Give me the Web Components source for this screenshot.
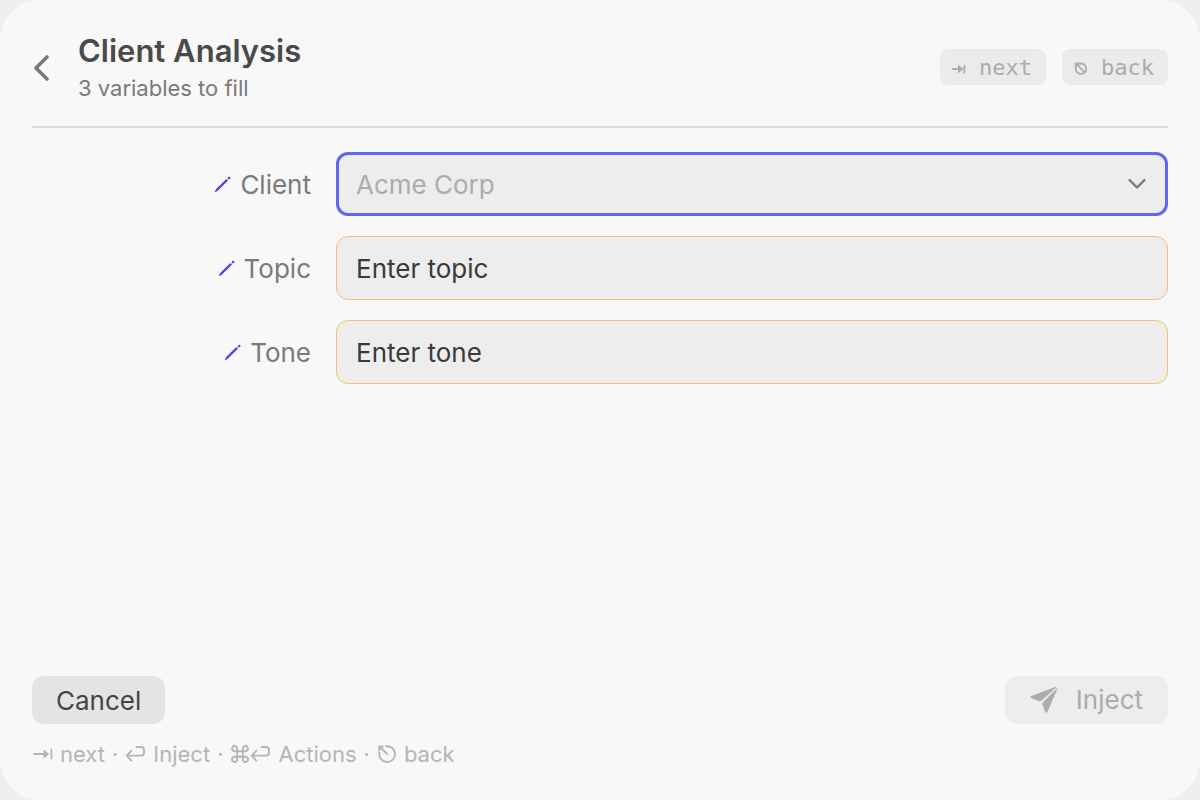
<!DOCTYPE html>
<html lang="en">
<head>
<meta charset="utf-8">
<meta name="viewport" content="width=device-width, initial-scale=1">
<title>Client Analysis</title>
<style>
  :root {
    --surface: #f8f8f8;
    --field: #ededed;
    --line: #dddddd;
    --accent: #6366f1;
    --accent-deep: #4f46e5;
    --warning: #f2c078;
    --text: #3a3a3a;
    --muted: #7a7a7a;
    --faint: #acacac;
    --hint: #b5b5b5;
    --mono: "DejaVu Sans Mono", "Liberation Mono", monospace;
  }
  body {
    margin: 0;
    background: #efefef;
    color: var(--text);
    font-family: Inter, "Liberation Sans", sans-serif;
  }
</style>
</head>
<body>
<prompt-panel heading="Client Analysis" subtitle="3 variables to fill">
  <key-badge slot="keys" icon="tab-small">next</key-badge>
  <key-badge slot="keys" icon="esc-small">back</key-badge>

  <variable-field label="Client" type="select" value="Acme Corp" active></variable-field>
  <variable-field label="Topic" value="Enter topic"></variable-field>
  <variable-field label="Tone" value="Enter tone"></variable-field>

  <panel-button slot="actions">Cancel</panel-button>
  <panel-button slot="actions" icon="send" disabled>Inject</panel-button>

  <key-hint slot="hints" icons="tab">next</key-hint>
  <key-hint slot="hints" icons="return">Inject</key-hint>
  <key-hint slot="hints" icons="command return">Actions</key-hint>
  <key-hint slot="hints" icons="esc">back</key-hint>
</prompt-panel>

<script>
const ICONS = {
  back: [18, 28, '<path d="M15 4 4 15 15 26" stroke-width="3.6"/>'],
  chevron: [20, 14, '<path d="M2.5 3 10 10.5 17.5 3" stroke-width="2.4"/>'],
  pencil: [16, 16, '<path d="M2.2 13.6 11.6 4.4" stroke-width="2.3"/><path d="M.8 15.1 2 14" stroke-width="1.6"/><path d="m14 2.2.2-.2" stroke-width="2.5"/>'],
  'tab-small': [14, 14, '<path d="M.8 8H9" stroke-width="1.8"/><path d="M6 3.8v8.4L11.8 8z" fill="currentColor" stroke="none"/><path d="M12.4 4.4v7.2" stroke-width="1.8"/>'],
  'esc-small': [14, 14, '<path d="M4.8 3A5.2 5.2 0 1 1 2.2 5.7" stroke-width="1.8"/><path d="M2.5 3 10.6 11.3" stroke-width="1.7"/><path d="M.8 1.6h5.2L.8 6.8z" fill="currentColor" stroke="none"/>'],
  tab: [21, 20, '<path d="M2 10h12" stroke-width="1.9"/><path d="M11.5 5.4v9.2L17.2 10z" fill="currentColor" stroke="none"/><path d="M19.4 5.5v9" stroke-width="1.8"/>'],
  return: [21, 20, '<path d="M11.5 3H16a3 3 0 0 1 3 3v2.6a3 3 0 0 1-3 3H2.2" stroke-width="1.9"/><path d="M6.2 6.8 1.8 11.6 6.2 16.6" stroke-width="1.9"/>'],
  command: [20, 20, '<path d="M7.2 7.2H12.8V12.8H7.2zM7.2 7.2H4.7A2.6 2.6 0 1 1 7.2 4.6zM12.8 7.2V4.6A2.6 2.6 0 1 1 15.3 7.2zM12.8 12.8h2.5a2.6 2.6 0 1 1-2.5 2.6zM7.2 12.8v2.6a2.6 2.6 0 1 1-2.5-2.6z" stroke-width="1.9"/>'],
  esc: [20, 20, '<path d="M9 2.3A7.9 7.9 0 1 1 2.4 8.6" stroke-width="1.9"/><path d="M3.5 3.5 10 9.8" stroke-width="1.9"/><path d="M1.3 1.7h6.2L1.3 7.9z" fill="currentColor" stroke="none"/>'],
  send: [28, 28, '<path d="M26 .8 1.3 10Q-.5 10.9 1.2 11.9L8.8 15Q10.6 15.6 12 14.2L26.2 1.4Q26.6.6 26 .8z" fill="currentColor" stroke="none"/><path d="M27 2.2 13.2 15.9Q12 17.1 12.5 18.8L15.2 26Q16.2 27.6 17.3 26L27.5 2.8Q27.6 1.8 27 2.2z" fill="currentColor" stroke="none"/>']
};

function icon(name) {
  const [width, height, body] = ICONS[name];
  return `<svg class="icon" width="${width}" height="${height}" viewBox="0 0 ${width} ${height}"
    fill="none" stroke="currentColor" stroke-linecap="round" stroke-linejoin="round" aria-hidden="true">${body}</svg>`;
}

/**
 * Window frame: header, variable list, action bar and key hints.
 */
class PromptPanel extends HTMLElement {
  constructor() {
    super();
    this.attachShadow({ mode: 'open' });
  }

  connectedCallback() {
    this.shadowRoot.innerHTML = `
      <style>
        :host {
          display: flex;
          flex-direction: column;
          box-sizing: border-box;
          min-height: 100vh;
          padding: 32px;
          border-radius: 40px;
          background: var(--surface);
        }
        header {
          display: flex;
          align-items: center;
          gap: 28px;
          padding-bottom: 24px;
          border-bottom: 2px solid var(--line);
        }
        .back {
          display: flex;
          padding: 0;
          border: 0;
          background: none;
          color: var(--muted);
        }
        .titles { flex: 1; }
        h1 {
          margin: 0 0 4px;
          color: #4a4a4a;
          font-size: 31px;
          font-weight: 600;
          line-height: 38px;
        }
        p {
          margin: 0;
          color: var(--muted);
          font-size: 22px;
          line-height: 28px;
        }
        .keys { display: flex; gap: 16px; }
        main {
          flex: 1;
          display: flex;
          flex-direction: column;
          gap: 20px;
          padding: 24px 0;
        }
        .actions {
          display: flex;
          justify-content: space-between;
        }
        footer {
          display: flex;
          margin-top: 16px;
          color: var(--hint);
          font-size: 22px;
          line-height: 28px;
        }
      </style>
      <header>
        <button class="back" aria-label="Back">${icon('back')}</button>
        <div class="titles">
          <h1>${this.getAttribute('heading')}</h1>
          <p>${this.getAttribute('subtitle')}</p>
        </div>
        <div class="keys"><slot name="keys"></slot></div>
      </header>
      <main><slot></slot></main>
      <div class="actions"><slot name="actions"></slot></div>
      <footer><slot name="hints"></slot></footer>
    `;
  }
}

/**
 * Shortcut badge in the header.
 */
class KeyBadge extends HTMLElement {
  constructor() {
    super();
    this.attachShadow({ mode: 'open' });
  }

  connectedCallback() {
    this.shadowRoot.innerHTML = `
      <style>
        :host { display: block; }
        button {
          display: flex;
          align-items: center;
          gap: 13px;
          height: 36px;
          padding: 2px 14px 0 12px;
          border: 0;
          border-radius: 8px;
          background: #ebebeb;
          color: var(--faint);
          font: 22px/28px var(--mono);
        }
      </style>
      <button>${icon(this.getAttribute('icon'))}<span><slot></slot></span></button>
    `;
  }
}

/**
 * One labelled variable, either free text or a list of choices.
 */
class VariableField extends HTMLElement {
  constructor() {
    super();
    this.attachShadow({ mode: 'open' });
  }

  connectedCallback() {
    const value = this.getAttribute('value') || '';
    const isSelect = this.getAttribute('type') === 'select';
    const control = isSelect
      ? `<select id="control"><option>${value}</option></select>${icon('chevron')}`
      : `<input id="control" type="text" value="${value}">`;

    this.shadowRoot.innerHTML = `
      <style>
        :host {
          display: grid;
          grid-template-columns: 280px 1fr;
          align-items: center;
          gap: 24px;
          font-size: 26px;
          line-height: 32px;
        }
        label {
          display: flex;
          align-items: center;
          justify-content: flex-end;
          gap: 9px;
          padding-right: 1px;
          color: var(--muted);
        }
        label .icon { color: var(--accent-deep); }
        label span, input, select { padding: 2px 0 0; }
        .control {
          display: grid;
          align-items: center;
          box-sizing: border-box;
          height: 64px;
          padding: 0 19px;
          border: 1px solid var(--warning);
          border-radius: 12px;
          background: var(--field);
        }
        :host([active]) .control {
          padding: 0 18px 0 17px;
          border: 3px solid var(--accent);
        }
        input, select {
          grid-area: 1 / 1;
          width: 100%;
          margin: 0;
          border: 0;
          outline: 0;
          appearance: none;
          background: none;
          color: var(--text);
          font: inherit;
        }
        select { color: var(--faint); }
        .control .icon {
          grid-area: 1 / 1;
          justify-self: end;
          color: var(--muted);
          pointer-events: none;
        }
      </style>
      <label for="control">${icon('pencil')}<span>${this.getAttribute('label')}</span></label>
      <div class="control">${control}</div>
    `;
  }
}

class PanelButton extends HTMLElement {
  constructor() {
    super();
    this.attachShadow({ mode: 'open' });
  }

  connectedCallback() {
    const name = this.getAttribute('icon');
    this.shadowRoot.innerHTML = `
      <style>
        :host { display: block; }
        button {
          display: flex;
          align-items: center;
          gap: 18px;
          height: 48px;
          padding: 2px 24px 0;
          border: 0;
          border-radius: 12px;
          background: #e4e4e3;
          color: #444444;
          font: inherit;
          font-size: 26px;
          line-height: 32px;
        }
        :host([icon]) button { padding: 0 25px; }
        button:disabled {
          background: var(--field);
          color: var(--faint);
        }
      </style>
      <button ${this.hasAttribute('disabled') ? 'disabled' : ''}>${name ? icon(name) : ''}<span><slot></slot></span></button>
    `;
  }
}

/**
 * Footer hint: one or more key symbols and what they do.
 */
class KeyHint extends HTMLElement {
  constructor() {
    super();
    this.attachShadow({ mode: 'open' });
  }

  connectedCallback() {
    const icons = this.getAttribute('icons').split(' ').map(icon).join('');
    this.shadowRoot.innerHTML = `
      <style>
        :host {
          display: flex;
          align-items: center;
        }
        .icons { display: flex; margin-right: 7px; }
        :host(:not(:last-child))::after {
          content: "·";
          margin: 0 7px;
        }
      </style>
      <span class="icons">${icons}</span><span><slot></slot></span>
    `;
  }
}

customElements.define('prompt-panel', PromptPanel);
customElements.define('key-badge', KeyBadge);
customElements.define('variable-field', VariableField);
customElements.define('panel-button', PanelButton);
customElements.define('key-hint', KeyHint);
</script>
</body>
</html>
